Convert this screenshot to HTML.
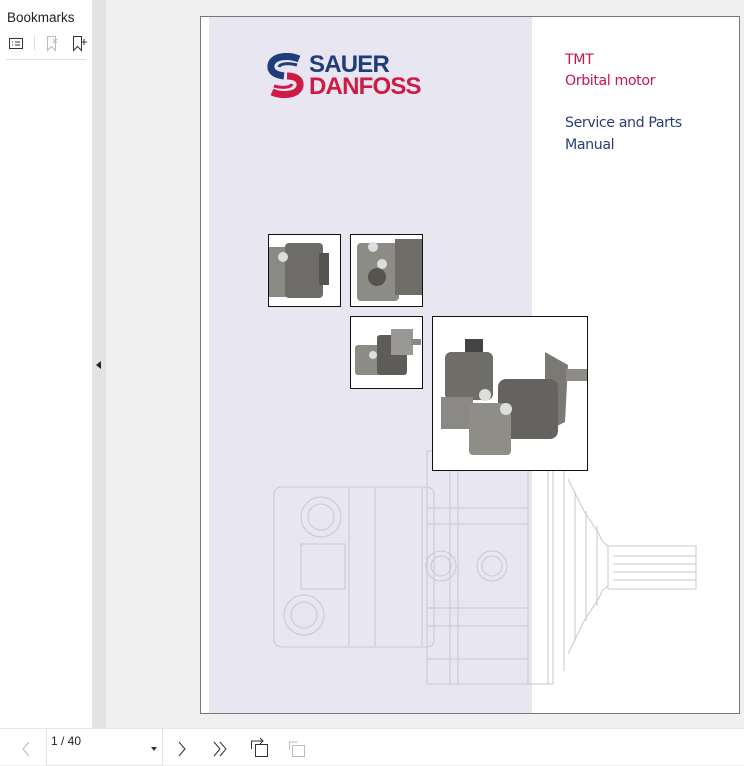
<!DOCTYPE html>
<html><head><meta charset="utf-8"><style>
*{margin:0;padding:0;box-sizing:border-box}
body{width:744px;height:765px;position:relative;background:#f0f0f0;font-family:"Liberation Sans",sans-serif;overflow:hidden}
.side{position:absolute;left:0;top:0;width:92px;height:728px;background:#fff}
.strip{position:absolute;left:92px;top:0;width:14px;height:728px;background:#e3e3e3}
.bar{position:absolute;left:0;top:728px;width:744px;height:37px;background:#fff;border-top:1px solid #e8e8e8}
.page{position:absolute;left:200px;top:16px;width:540px;height:698px;border:1px solid #777;background:#fff}
.lav{position:absolute;left:8px;top:0;width:323px;height:696px;background:#e8e6f0}
.t{position:absolute;left:364px;font-family:"DejaVu Sans","Liberation Sans",sans-serif;font-size:14.2px;letter-spacing:-0.4px}
.box{position:absolute;border:1.5px solid #111;background:#fff;overflow:hidden}
.lg{position:absolute;left:108px;font-weight:bold;font-size:24px;letter-spacing:-0.8px;line-height:24px}
</style></head><body>
<div class="side">
<div style="position:absolute;left:7px;top:10px;font-size:13.5px;color:#222">Bookmarks</div>
<svg style="position:absolute;left:0;top:34px" width="92" height="24">
<rect x="9.5" y="4.5" width="13" height="10" fill="none" stroke="#333"/>
<line x1="12" y1="8" x2="13" y2="8" stroke="#333"/><line x1="15" y1="8" x2="20" y2="8" stroke="#333"/>
<line x1="12" y1="11" x2="13" y2="11" stroke="#333"/><line x1="15" y1="11" x2="20" y2="11" stroke="#333"/>
<line x1="34.5" y1="2" x2="34.5" y2="16" stroke="#ddd"/>
<path d="M47.5 2.5v14l4-4 4 4v-14z" fill="none" stroke="#bbb"/><path d="M53 5l4 4M57 5l-4 4" stroke="#bbb"/>
<path d="M73.5 2.5v14l4-4 4 4v-14z" fill="none" stroke="#333"/><path d="M81 8h6M84 5v6" stroke="#333"/>
</svg>
<div style="position:absolute;left:6px;top:59px;width:80px;height:1px;background:#e0e0e0"></div>
</div>
<div class="strip"><div style="position:absolute;left:4px;top:361px;width:0;height:0;border-top:4px solid transparent;border-bottom:4px solid transparent;border-right:5px solid #222"></div></div>

<div class="page">
<div class="lav"></div>
<svg style="position:absolute;left:-200px;top:-16px" width="744" height="765" fill="none" stroke="#c9c7d4" stroke-width="1">
<rect x="273" y="486" width="160" height="160" rx="7"/>
<line x1="348" y1="487" x2="348" y2="645"/><line x1="374" y1="487" x2="374" y2="645"/><line x1="421" y1="487" x2="421" y2="645"/>
<circle cx="320" cy="516" r="20"/><circle cx="320" cy="516" r="13"/>
<circle cx="303" cy="614" r="20"/><circle cx="303" cy="614" r="13"/>
<rect x="300" y="543" width="44" height="45"/>
<rect x="426" y="450" width="101" height="233"/>
<line x1="449" y1="450" x2="449" y2="683"/><line x1="457" y1="450" x2="457" y2="683"/>
<line x1="426" y1="507" x2="527" y2="507"/><line x1="426" y1="523" x2="527" y2="523"/>
<line x1="426" y1="607" x2="527" y2="607"/><line x1="426" y1="625" x2="527" y2="625"/><line x1="426" y1="658" x2="527" y2="658"/>
<circle cx="440" cy="565" r="15"/><circle cx="440" cy="565" r="10"/>
<circle cx="491" cy="565" r="15"/><circle cx="491" cy="565" r="10"/>
<line x1="547" y1="470" x2="547" y2="683"/><line x1="552" y1="470" x2="552" y2="683"/><line x1="563" y1="470" x2="563" y2="670"/>
<line x1="527" y1="683" x2="552" y2="683"/>
<path d="M567 478L583 510L598 533L601 540L607 545M567 653L583 620L598 597L601 590L607 585"/>
<line x1="574" y1="490" x2="574" y2="640"/><line x1="585" y1="510" x2="585" y2="620"/><line x1="596" y1="525" x2="596" y2="605"/>
<rect x="607" y="545" width="88" height="43"/>
<line x1="612" y1="555" x2="695" y2="555"/><line x1="612" y1="563" x2="695" y2="563"/><line x1="612" y1="571" x2="695" y2="571"/><line x1="612" y1="579" x2="695" y2="579"/>
</svg>

<svg style="position:absolute;left:66px;top:36px" width="38" height="46">
<path d="M32 6 C23 2 6 2 4 12 C3 19 9 22 17 23" stroke="#203c7c" stroke-width="7" fill="none"/>
<path d="M30 12 C23 10 13 10 12 14" stroke="#203c7c" stroke-width="3" fill="none"/>
<path d="M5 39 C14 43 31 43 33 33 C34 26 28 23 20 23" stroke="#cf1a45" stroke-width="7" fill="none"/>
<path d="M7 33 C14 35 24 35 25 31" stroke="#cf1a45" stroke-width="3" fill="none"/>
</svg>
<div class="lg" style="top:36px;color:#203c7c">SAUER</div>
<div class="lg" style="top:58px;color:#cf1a45">DANFOSS</div>

<div class="t" style="top:35px;color:#c8174a">TMT</div>
<div class="t" style="top:56px;color:#c8174a">Orbital motor</div>
<div class="t" style="top:98px;color:#2b3d78">Service and Parts</div>
<div class="t" style="top:120px;color:#2b3d78">Manual</div>

<div class="box" style="left:67px;top:217px;width:73px;height:73px">
<svg width="73" height="73"><rect x="0" y="12" width="18" height="50" fill="#8a8a85"/><rect x="16" y="8" width="38" height="55" rx="4" fill="#6d6c68"/><rect x="50" y="18" width="10" height="32" fill="#55544f"/><circle cx="14" cy="22" r="5" fill="#ddd"/></svg></div>
<div class="box" style="left:149px;top:217px;width:73px;height:73px">
<svg width="73" height="73"><rect x="0" y="0" width="73" height="73" fill="#fff"/><rect x="6" y="8" width="42" height="58" rx="4" fill="#8c8b86"/><rect x="44" y="4" width="30" height="56" fill="#6e6d68"/><circle cx="22" cy="12" r="5" fill="#ddd"/><circle cx="31" cy="29" r="5" fill="#ddd"/><circle cx="26" cy="42" r="9" fill="#55544f"/></svg></div>
<div class="box" style="left:149px;top:299px;width:73px;height:73px">
<svg width="73" height="73"><rect x="4" y="28" width="26" height="30" rx="3" fill="#8c8b86"/><rect x="26" y="18" width="30" height="40" rx="3" fill="#5d5c58"/><rect x="40" y="12" width="22" height="26" fill="#999894"/><rect x="60" y="22" width="10" height="6" fill="#888"/><circle cx="22" cy="38" r="4" fill="#ddd"/></svg></div>
<div class="box" style="left:231px;top:299px;width:156px;height:155px">
<svg width="156" height="155"><rect x="32" y="22" width="18" height="18" fill="#444"/><rect x="12" y="35" width="48" height="48" rx="6" fill="#6e6d68"/><rect x="8" y="80" width="32" height="32" fill="#8a8985"/><path d="M112 35L135 48L132 105L112 115Z" fill="#7a7974"/><rect x="133" y="52" width="22" height="12" fill="#8d8c88"/><rect x="65" y="62" width="60" height="60" rx="8" fill="#64635f"/><rect x="36" y="86" width="42" height="52" rx="4" fill="#8e8d88"/><circle cx="52" cy="78" r="6" fill="#ddd"/><circle cx="73" cy="92" r="6" fill="#ddd"/></svg></div>
</div>

<div class="bar">
<svg style="position:absolute;left:0;top:0" width="320" height="37">
<path d="M29 13l-6 7 6 7" stroke="#bbb" fill="none"/>
<path d="M179 13l6 7-6 7" stroke="#333" fill="none"/>
<path d="M214 13l6 7-6 7M220 13l6 7-6 7" stroke="#333" fill="none"/>
<rect x="255.5" y="15.5" width="12" height="12" fill="none" stroke="#333"/><path d="M251.5 20v-8h6M260 9l3 3-3 3M257 12h6" stroke="#333" fill="none"/>
<rect x="292.5" y="16.5" width="12" height="11" fill="none" stroke="#bbb"/><path d="M289.5 21v-8h8" stroke="#bbb" fill="none"/>
</svg>
<div style="position:absolute;left:46px;top:0;width:117px;height:37px;border:1px solid #e3e3e3;border-top:none"></div>
<div style="position:absolute;left:51px;top:5px;font-size:12px;color:#222">1 / 40</div>
<div style="position:absolute;left:151px;top:18px;width:0;height:0;border-left:3px solid transparent;border-right:3px solid transparent;border-top:4px solid #333"></div>
</div>
</body></html>
